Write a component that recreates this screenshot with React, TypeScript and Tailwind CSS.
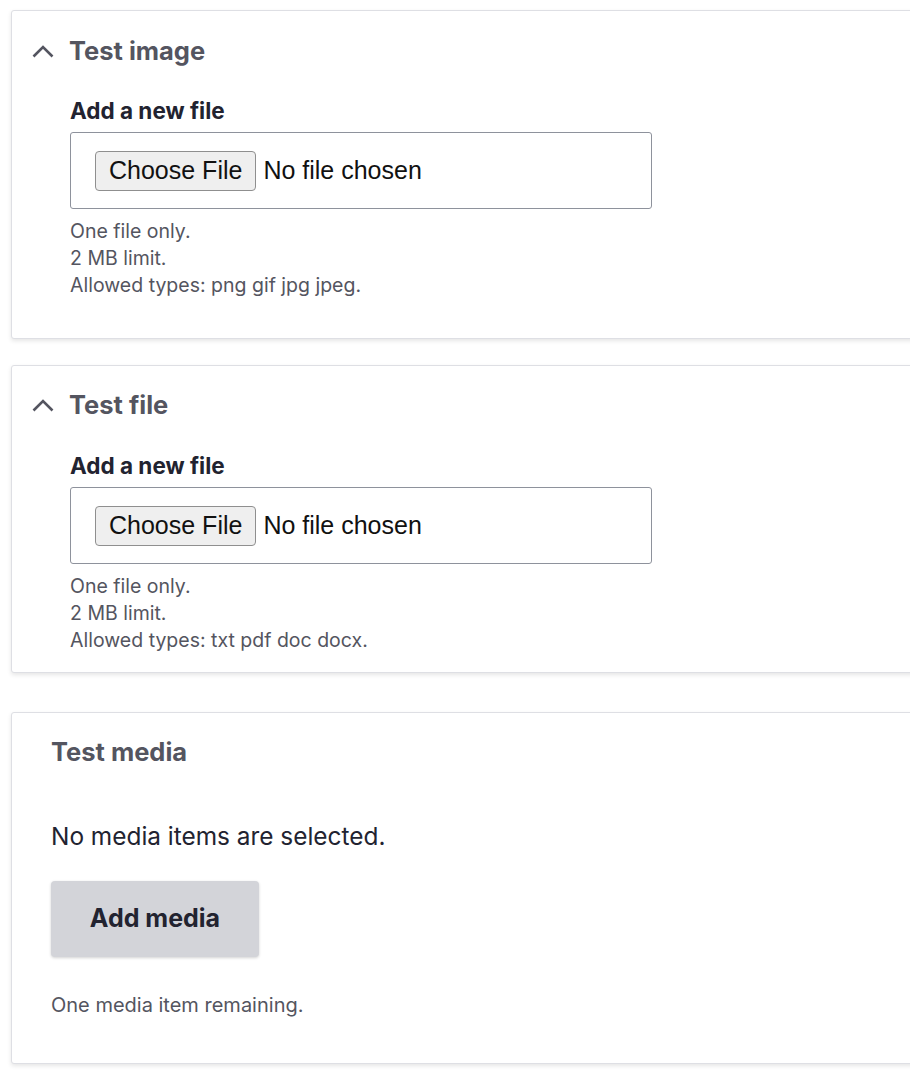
const sans = "font-['Inter','Noto_Sans',sans-serif]";

function Chevron() {
  return (
    <svg width="22" height="14" viewBox="0 0 22 14" className="shrink-0">
      <polyline
        points="1.5,12.5 11,3 20.5,12.5"
        fill="none"
        stroke="#545560"
        strokeWidth="2.6"
        strokeLinecap="butt"
        strokeLinejoin="miter"
      />
    </svg>
  );
}

function FileField({ types }: { types: string }) {
  return (
    <div className="pl-[58px]">
      <div className="text-[22.5px] font-bold text-[#222330] leading-[24px]">Add a new file</div>
      <div className="mt-[9px] w-[582px] h-[77px] border border-[#8e929c] rounded-[3px] flex items-center pl-[24px] font-['Liberation_Sans',Arial,sans-serif] text-[25px] text-[#111]">
        <span className="h-[40px] px-[13px] flex items-center bg-[#efefef] border border-[#8f8f8f] rounded-[4px] leading-none">
          Choose File
        </span>
        <span className="ml-[7px] leading-none">No file chosen</span>
      </div>
      <div className="mt-[9px] text-[19.5px] leading-[27px] text-[#545560]">
        <div>One file only.</div>
        <div>2 MB limit.</div>
        <div>Allowed types: {types}</div>
      </div>
    </div>
  );
}

function Card({ children, className }: { children: React.ReactNode; className: string }) {
  return (
    <div
      className={
        "ml-[11px] w-[960px] bg-white border border-[#dedfe4] rounded-[3px] shadow-[0_2px_4px_rgba(0,0,0,0.1)] " +
        className
      }
    >
      {children}
    </div>
  );
}

export default function App() {
  return (
    <div className={"w-[910px] h-[1076px] overflow-hidden bg-white pt-[10px] " + sans}>
      <Card className="pt-[24px] pb-[39px]">
        <div className="flex items-center pl-[20px] gap-[15px] h-[32px]">
          <Chevron />
          <span className="text-[25.5px] font-bold text-[#545560]">Test image</span>
        </div>
        <div className="mt-[32px]">
          <FileField types="png gif jpg jpeg." />
        </div>
      </Card>

      <Card className="mt-[26px] pt-[23px] pb-[18px]">
        <div className="flex items-center pl-[20px] gap-[15px] h-[32px]">
          <Chevron />
          <span className="text-[25.5px] font-bold text-[#545560]">Test file</span>
        </div>
        <div className="mt-[33px]">
          <FileField types="txt pdf doc docx." />
        </div>
      </Card>

      <Card className="mt-[39px] pt-[23px] pb-[46px]">
        <div className="pl-[39px]">
          <div className="text-[25.5px] font-bold text-[#545560] leading-[32px]">Test media</div>
          <div className="mt-[52px] text-[24.4px] text-[#222330] leading-[32px]">
            No media items are selected.
          </div>
          <button className="mt-[29px] w-[208px] h-[76px] bg-[#d3d4d9] rounded-[4px] shadow-[0_1px_3px_rgba(0,0,0,0.18)] text-[25px] font-bold text-[#222330]">
            Add media
          </button>
          <div className="mt-[36px] text-[20px] text-[#545560] leading-[24px]">
            One media item remaining.
          </div>
        </div>
      </Card>
    </div>
  );
}
